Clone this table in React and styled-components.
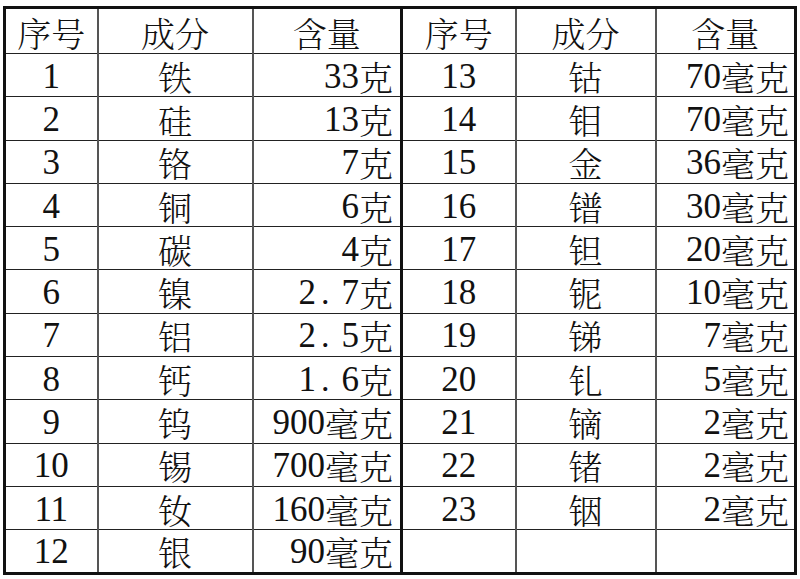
import React from "react";
import styled, { createGlobalStyle } from "styled-components";

const Global = createGlobalStyle`
  html, body { margin: 0; padding: 0; background: #fff; }
  body { width: 800px; height: 579px; overflow: hidden; }
`;

const Page = styled.div`
  padding: 6px 0 0 3px;
`;

const Table = styled.table`
  border-collapse: collapse;
  table-layout: fixed;
  width: 791px;
  border: 3px solid #111;
  font-family: "Liberation Serif", "DejaVu Serif", serif;
  font-size: 34px;
  font-weight: 400;
  color: #111;
`;

const Row = styled.tr`
  height: ${(p) => (p.$head ? "46px" : "43.3px")};
`;

const Cell = styled.td`
  padding: 3px ${(p) => (p.$align === "right" ? (p.$side === "r" ? "5px" : "7px") : "0")} 0 0;
  text-align: ${(p) => p.$align || "center"};
  vertical-align: middle;
  line-height: 34px;
  border-top: 1.5px solid #222;
  border-bottom: 1.5px solid #222;
  border-left: 2px solid #555;
  border-right: ${(p) => (p.$divider ? "3px solid #111" : "2px solid #555")};
  white-space: nowrap;
`;

const Num = styled.span`
  display: inline-block;
  height: 34px;
  line-height: 34px;
  vertical-align: top;
  font-family: "Liberation Serif", "DejaVu Serif", serif;
  font-size: 35px;
`;

const Han = styled.span`
  display: inline-block;
  height: 34px;
  line-height: 34px;
  vertical-align: top;
  font-family: "Noto Serif CJK SC", "Noto Sans CJK SC", sans-serif;
  font-weight: 300;
`;

const Dot = styled.span`
  display: inline-block;
  height: 34px;
  line-height: 34px;
  vertical-align: top;
  font-family: "Liberation Serif", "DejaVu Serif", serif;
  margin: 0 12px 0 5px;
`;

const left = [
  ["1", "铁", "33", "克"],
  ["2", "硅", "13", "克"],
  ["3", "铬", "7", "克"],
  ["4", "铜", "6", "克"],
  ["5", "碳", "4", "克"],
  ["6", "镍", "2.7", "克"],
  ["7", "铝", "2.5", "克"],
  ["8", "钙", "1.6", "克"],
  ["9", "钨", "900", "毫克"],
  ["10", "锡", "700", "毫克"],
  ["11", "钕", "160", "毫克"],
  ["12", "银", "90", "毫克"],
];

const right = [
  ["13", "钴", "70", "毫克"],
  ["14", "钼", "70", "毫克"],
  ["15", "金", "36", "毫克"],
  ["16", "镨", "30", "毫克"],
  ["17", "钽", "20", "毫克"],
  ["18", "铌", "10", "毫克"],
  ["19", "锑", "7", "毫克"],
  ["20", "钆", "5", "毫克"],
  ["21", "镝", "2", "毫克"],
  ["22", "锗", "2", "毫克"],
  ["23", "铟", "2", "毫克"],
  ["", "", "", ""],
];

function Value({ num }) {
  const i = num.indexOf(".");
  if (i < 0) return <Num>{num}</Num>;
  return (
    <>
      <Num>{num.slice(0, i)}</Num>
      <Dot>.</Dot>
      <Num>{num.slice(i + 1)}</Num>
    </>
  );
}

function Amount({ num, unit }) {
  if (!num) return null;
  return (
    <>
      <Value num={num} />
      <Han>{unit}</Han>
    </>
  );
}

export default function App() {
  return (
    <>
      <Global />
      <Page>
        <Table>
          <colgroup>
            <col style={{ width: 93 }} />
            <col style={{ width: 155 }} />
            <col style={{ width: 149 }} />
            <col style={{ width: 114 }} />
            <col style={{ width: 140 }} />
            <col style={{ width: 140 }} />
          </colgroup>
          <tbody>
            <Row $head>
              <Cell><Han>序号</Han></Cell>
              <Cell><Han>成分</Han></Cell>
              <Cell $divider><Han>含量</Han></Cell>
              <Cell><Han>序号</Han></Cell>
              <Cell><Han>成分</Han></Cell>
              <Cell><Han>含量</Han></Cell>
            </Row>
            {left.map((l, k) => {
              const r = right[k];
              return (
                <Row key={k}>
                  <Cell><Num>{l[0]}</Num></Cell>
                  <Cell><Han>{l[1]}</Han></Cell>
                  <Cell $align="right" $divider>
                    <Amount num={l[2]} unit={l[3]} />
                  </Cell>
                  <Cell><Num>{r[0]}</Num></Cell>
                  <Cell><Han>{r[1]}</Han></Cell>
                  <Cell $align="right" $side="r">
                    <Amount num={r[2]} unit={r[3]} />
                  </Cell>
                </Row>
              );
            })}
          </tbody>
        </Table>
      </Page>
    </>
  );
}
